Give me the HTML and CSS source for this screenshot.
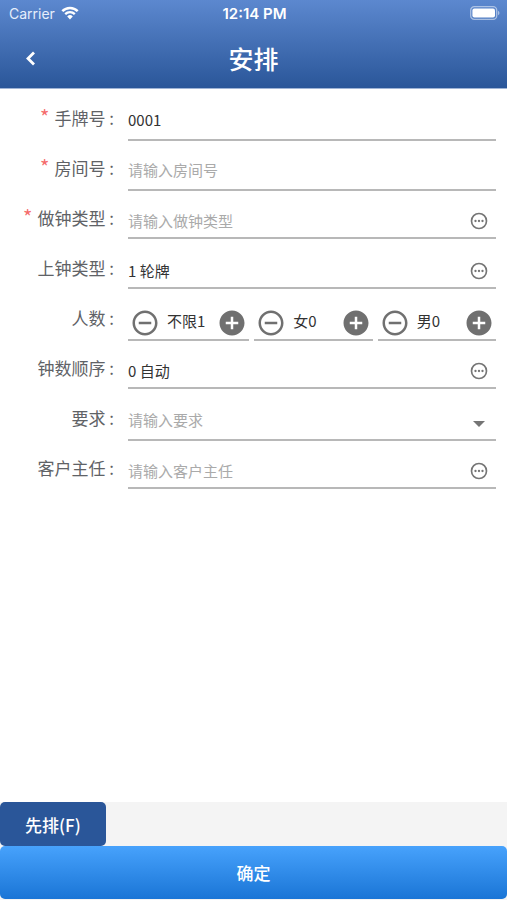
FILE: index.html
```html
<!DOCTYPE html>
<html lang="zh-CN">

<head>
    <meta charset="UTF-8">
    <meta name="viewport" content="width=device-width, initial-scale=1.0">
    <title>安排</title>
    <link rel="stylesheet" href="styles.css">
</head>

<body>

    <!-- 图标 -->
    <svg class="sprite" aria-hidden="true">
        <symbol id="icon-more" viewBox="0 0 24 24">
            <circle cx="12" cy="12" r="9" fill="none" stroke="currentColor" stroke-width="2"/>
            <circle cx="7.8" cy="12" r="1.4"/>
            <circle cx="12" cy="12" r="1.4"/>
            <circle cx="16.2" cy="12" r="1.4"/>
        </symbol>
        <symbol id="icon-minus" viewBox="0 0 24 24">
            <path d="M7 11v2h10v-2H7zm5-9C6.48 2 2 6.48 2 12s4.48 10 10 10 10-4.48 10-10S17.52 2 12 2zm0 18c-4.41 0-8-3.59-8-8s3.59-8 8-8 8 3.59 8 8-3.59 8-8 8z"/>
        </symbol>
        <symbol id="icon-plus" viewBox="0 0 24 24">
            <path d="M12 2C6.48 2 2 6.48 2 12s4.48 10 10 10 10-4.48 10-10S17.52 2 12 2zm5 11h-4v4h-2v-4H7v-2h4V7h2v4h4v2z"/>
        </symbol>
    </svg>

    <header class="header">
        <div class="status-bar">
            <div class="carrier">
                <span>Carrier</span>
                <svg class="wifi" viewBox="0 0 18 14">
                    <path d="M1.3 5.1a11 11 0 0 1 15.4 0" fill="none" stroke="currentColor" stroke-width="2.5"/>
                    <path d="M4.2 8.1a6.9 6.9 0 0 1 9.6 0" fill="none" stroke="currentColor" stroke-width="2.3"/>
                    <path d="M6.2 10.4a4 4 0 0 1 5.6 0L9 13.6z" fill="currentColor"/>
                </svg>
            </div>
            <span class="time">12:14 PM</span>
            <svg class="battery" viewBox="0 0 30 14">
                <rect x="0.7" y="0.7" width="26" height="12.6" rx="3.6" fill="none" stroke="#fff" stroke-opacity="0.5" stroke-width="1.3"/>
                <rect x="2.4" y="2.4" width="22.6" height="9.2" rx="2" fill="#fff"/>
                <path d="M28 4.8c2 .8 2 3.6 0 4.4z" fill="#fff" fill-opacity="0.5"/>
            </svg>
        </div>
        <div class="title-bar">
            <button type="button" class="back" aria-label="返回">
                <svg viewBox="0 0 12 18"><path d="M10 3.500L4 9.500l6 6" fill="none" stroke="currentColor" stroke-width="2.8"/></svg>
            </button>
            <h1>安排</h1>
        </div>
    </header>

    <form id="arrangeForm" class="form">
        <div class="row">
            <label for="cardNo"><span class="required">*</span>手牌号 :</label>
            <div class="field">
                <input type="text" id="cardNo" value="0001">
            </div>
        </div>
        <div class="row">
            <label for="roomNo"><span class="required">*</span>房间号 :</label>
            <div class="field">
                <input type="text" id="roomNo" placeholder="请输入房间号">
            </div>
        </div>
        <div class="row">
            <label for="workType"><span class="required">*</span>做钟类型 :</label>
            <div class="field picker">
                <input type="text" id="workType" placeholder="请输入做钟类型">
                <button type="button" class="more" aria-label="选择做钟类型"><svg><use href="#icon-more"/></svg></button>
            </div>
        </div>
        <div class="row">
            <label for="startType">上钟类型 :</label>
            <div class="field picker">
                <input type="text" id="startType" value="1 轮牌">
                <button type="button" class="more" aria-label="选择上钟类型"><svg><use href="#icon-more"/></svg></button>
            </div>
        </div>
        <div class="row" role="group" aria-labelledby="peopleLabel">
            <span id="peopleLabel" class="label">人数 :</span>
            <div class="steppers">
                <div class="stepper">
                    <button type="button" aria-label="不限减一"><svg><use href="#icon-minus"/></svg></button>
                    <output>不限1</output>
                    <button type="button" aria-label="不限加一"><svg><use href="#icon-plus"/></svg></button>
                </div>
                <div class="stepper">
                    <button type="button" aria-label="女减一"><svg><use href="#icon-minus"/></svg></button>
                    <output>女0</output>
                    <button type="button" aria-label="女加一"><svg><use href="#icon-plus"/></svg></button>
                </div>
                <div class="stepper">
                    <button type="button" aria-label="男减一"><svg><use href="#icon-minus"/></svg></button>
                    <output>男0</output>
                    <button type="button" aria-label="男加一"><svg><use href="#icon-plus"/></svg></button>
                </div>
            </div>
        </div>
        <div class="row">
            <label for="clockOrder">钟数顺序 :</label>
            <div class="field picker">
                <input type="text" id="clockOrder" value="0 自动">
                <button type="button" class="more" aria-label="选择钟数顺序"><svg><use href="#icon-more"/></svg></button>
            </div>
        </div>
        <div class="row">
            <label for="demand">要求 :</label>
            <div class="field">
                <select id="demand">
                    <option value="">请输入要求</option>
                </select>
                <svg class="arrow" viewBox="0 0 12 6"><path d="M0 0h12L6 6z"/></svg>
            </div>
        </div>
        <div class="row">
            <label for="manager">客户主任 :</label>
            <div class="field picker">
                <input type="text" id="manager" placeholder="请输入客户主任">
                <button type="button" class="more" aria-label="选择客户主任"><svg><use href="#icon-more"/></svg></button>
            </div>
        </div>
    </form>

    <footer class="footer">
        <button type="button" class="first-btn">先排(F)</button>
        <button type="submit" form="arrangeForm" class="submit-btn">确定</button>
    </footer>

</body>

</html>
```
FILE: styles.css
```css
* {
    box-sizing: border-box;
}

body {
    margin: 0;
    min-height: 100vh;
    display: flex;
    flex-direction: column;
    background-color: #fff;
    color: #333;
    font-family: "Noto Sans CJK SC", sans-serif;
    font-size: 15px;
}

button,
input,
select {
    margin: 0;
    padding: 0;
    border: none;
    background: none;
    color: inherit;
    font: inherit;
}

button {
    cursor: pointer;
}

svg {
    display: block;
    fill: currentColor;
}

.sprite {
    position: absolute;
    width: 0;
    height: 0;
}

/* 顶部 */
.header {
    color: #fff;
    background: linear-gradient(#5c88cf, #2a5699);
    border-bottom: 1px solid #9fb4d6;
}

.status-bar {
    display: grid;
    grid-template-columns: 1fr auto 1fr;
    align-items: center;
    height: 26px;
    padding: 0 7px 0 9px;
    font-family: Inter, sans-serif;
    font-size: 14px;
}

.carrier {
    display: flex;
    align-items: center;
    gap: 6px;
    color: #e6eefb;
}

.wifi {
    width: 18px;
    height: 14px;
    color: #fff;
}

.time {
    font-size: 15px;
    font-weight: 600;
}

.battery {
    width: 30px;
    height: 14px;
    justify-self: end;
}

.title-bar {
    display: grid;
    grid-template-columns: 60px 1fr 60px;
    align-items: center;
    height: 62px;
    padding-top: 2px;
}

.title-bar h1 {
    margin: 0;
    font-size: 25px;
    font-weight: 500;
    line-height: 36px;
    text-align: center;
}

.back {
    display: flex;
    justify-content: center;
    height: 18px;
}

.back svg {
    width: 12px;
    height: 18px;
}

/* 表单 */
.form {
    flex: 1;
    padding: 5px 11px 0 0;
}

.row {
    display: flex;
    gap: 14px;
    height: 50px;
}

.row label,
.label {
    flex: none;
    width: 114px;
    font-size: 17px;
    line-height: 48px;
    text-align: right;
    white-space: nowrap;
    color: #606266;
}

.required {
    margin-right: 5px;
    font-size: 20px;
    line-height: 1;
    color: #f56c6c;
}

.field {
    position: relative;
    flex: 1;
    display: flex;
    min-width: 0;
    height: 47px;
    padding-top: 5px;
    border-bottom: 2px solid #b8b8b8;
}

.picker {
    height: 45px;
    padding-top: 9px;
}

.field input,
.field select {
    flex: 1;
    min-width: 0;
    outline: none;
}

.field select {
    appearance: none;
    color: #aaa;
}

.field input::placeholder {
    color: #aaa;
    opacity: 1;
}

.more {
    align-self: center;
    margin-right: 7px;
    padding-top: 1px;
    color: #757575;
}

.more svg {
    width: 20px;
    height: 20px;
}

.arrow {
    position: absolute;
    top: 27px;
    right: 11px;
    width: 12px;
    height: 6px;
    color: #757575;
    pointer-events: none;
}

.steppers {
    flex: 1;
    display: grid;
    grid-template-columns: 121fr 118fr 118fr;
    gap: 5px;
    height: 47px;
}

.stepper {
    display: flex;
    align-items: center;
    padding: 12px 2px 0;
    border-bottom: 2px solid #b8b8b8;
}

.stepper output {
    flex: 1;
    padding: 0 0 4px 7px;
    white-space: nowrap;
}

.stepper button {
    color: #707070;
}

.stepper svg {
    width: 30px;
    height: 30px;
}

/* 底部按钮 */
.footer {
    padding-bottom: 1px;
    background-color: #f4f4f4;
}

.first-btn,
.submit-btn {
    display: block;
    border-radius: 5px;
    color: #fff;
    font-size: 17px;
    font-weight: 500;
}

.first-btn {
    height: 44px;
    padding: 0 25px;
    background-color: #2a5699;
}

.submit-btn {
    width: 100%;
    height: 53px;
    background: linear-gradient(#47a2fc, #1a75d6);
}
```
